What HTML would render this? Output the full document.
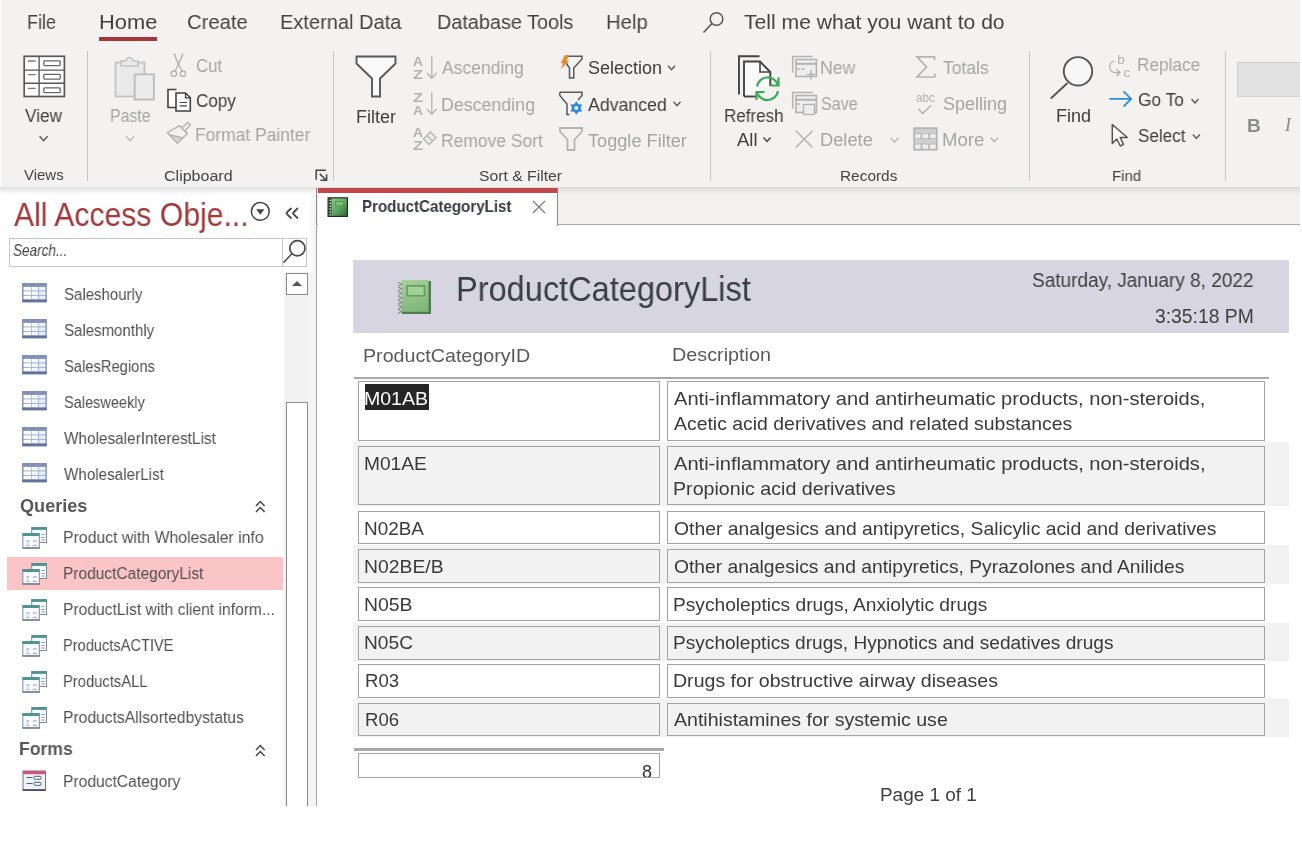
<!DOCTYPE html>
<html><head><meta charset="utf-8">
<style>
html,body{margin:0;padding:0;}
body{width:1302px;height:842px;overflow:hidden;position:relative;background:#fff;font-family:"Liberation Sans",sans-serif;}
.abs{position:absolute;}
.t{position:absolute;white-space:nowrap;line-height:1;transform-origin:0 0;will-change:transform;}
.box{border:1px solid #a3a3a3;box-sizing:content-box;}
svg{position:absolute;overflow:visible;will-change:transform;}
</style></head><body>
<!-- ribbon -->
<div class="abs" style="left:1px;top:0;width:1299px;height:187px;background:#f3f2f1"></div>
<div class="abs" style="left:0;top:187px;width:1300px;height:8px;background:linear-gradient(#dcdcdc,rgba(240,240,240,0))"></div>
<div class="abs" style="left:99px;top:37px;width:58px;height:4px;background:#a4373a"></div>
<!-- group separators -->
<div class="abs" style="left:86.5px;top:51px;width:1px;height:130px;background:#c8c6c4"></div>
<div class="abs" style="left:332.5px;top:51px;width:1px;height:130px;background:#c8c6c4"></div>
<div class="abs" style="left:709.5px;top:51px;width:1px;height:130px;background:#c8c6c4"></div>
<div class="abs" style="left:1028.5px;top:51px;width:1px;height:130px;background:#c8c6c4"></div>
<div class="abs" style="left:1224.5px;top:51px;width:1px;height:130px;background:#c8c6c4"></div>
<!-- text formatting combobox -->
<div class="abs" style="left:1237px;top:62px;width:63px;height:35px;background:#e1e1e1;border:1px solid #d2d2d2;border-right:none;box-sizing:border-box"></div>
<div class="t" style="left:1247.3px;top:115.5px;font-size:19px;font-weight:700;color:#8c8c8c;">B</div>
<div class="t" style="left:1285px;top:116px;font-size:18px;font-style:italic;color:#8a8a8a;font-family:'Liberation Serif',serif">I</div>

<!-- nav pane -->
<div class="abs" style="left:0;top:187px;width:316px;height:619px;background:#fff"></div>
<div class="abs" style="left:0;top:187px;width:316px;height:8px;background:linear-gradient(#e0e0e0,rgba(255,255,255,0))"></div>
<div class="abs" style="left:309px;top:195px;width:7px;height:77px;background:linear-gradient(90deg,rgba(240,240,240,0),#f2f2f2)"></div>
<div class="abs" style="left:315.8px;top:188px;width:1.2px;height:618px;background:#a4a4a4"></div>
<div class="abs" style="left:315.5px;top:188px;width:2px;height:36px;background:#8a8a8a"></div>
<!-- search box -->
<div class="abs" style="left:8.5px;top:238px;width:298px;height:29px;border:1px solid #c6c6c6;box-sizing:border-box;background:#fff"></div>
<div class="abs" style="left:281.5px;top:238px;width:1px;height:29px;background:#c6c6c6"></div>
<!-- scrollbar -->
<div class="abs" style="left:284px;top:272px;width:24px;height:534px;background:#f1f1f1"></div><div class="abs" style="left:308px;top:272px;width:8px;height:534px;background:linear-gradient(90deg,#f3f3f3,#f6f6f6)"></div>
<div class="abs" style="left:285.5px;top:272.5px;width:22px;height:22px;border:1px solid #8a8a8a;box-sizing:border-box;background:#fff"></div>
<div class="abs" style="left:285.5px;top:402px;width:22px;height:420px;border:1px solid #8a8a8a;box-sizing:border-box;background:#fff"></div>
<svg style="left:290px;top:277px" width="14" height="12"><path d="M2 9 L7 4 L12 9 Z" fill="#555"/></svg>
<!-- highlight -->
<div class="abs" style="left:7px;top:557px;width:276px;height:33px;background:#fbc5c7"></div>

<!-- tab strip -->
<div class="abs" style="left:317px;top:187px;width:983px;height:38px;background:#f2f1f0;border-bottom:1.5px solid #a6a6a6;box-sizing:border-box"></div>
<div class="abs" style="left:317px;top:187px;width:983px;height:8px;background:linear-gradient(#dcdcdc,rgba(240,240,240,0))"></div>
<div class="abs" style="left:318px;top:188px;width:240px;height:38px;background:#fff;border-right:1px solid #8a8a8a;box-sizing:border-box"></div>
<div class="abs" style="left:318px;top:188px;width:239px;height:5px;background:#c0474a"></div>

<!-- report header -->
<div class="abs" style="left:353px;top:259.5px;width:935.5px;height:73.5px;background:#d6d5e1"></div>
<div class="abs" style="left:354px;top:377px;width:914.5px;height:2px;background:#a8a8a8"></div>
<div class="abs box" style="left:357.5px;top:381.0px;width:300.5px;height:58.0px;background:#fff"></div>
<div class="abs box" style="left:666.5px;top:381.0px;width:596.8px;height:58.0px;background:#fff"></div>
<div class="abs" style="left:353px;top:442.2px;width:936px;height:64.2px;background:#f2f2f2"></div>
<div class="abs box" style="left:357.5px;top:445.7px;width:300.5px;height:57.7px;background:#f2f2f2"></div>
<div class="abs box" style="left:666.5px;top:445.7px;width:596.8px;height:57.7px;background:#f2f2f2"></div>
<div class="abs box" style="left:357.5px;top:510.7px;width:300.5px;height:31.0px;background:#fff"></div>
<div class="abs box" style="left:666.5px;top:510.7px;width:596.8px;height:31.0px;background:#fff"></div>
<div class="abs" style="left:353px;top:545.4px;width:936px;height:38.5px;background:#f2f2f2"></div>
<div class="abs box" style="left:357.5px;top:548.9px;width:300.5px;height:32.0px;background:#f2f2f2"></div>
<div class="abs box" style="left:666.5px;top:548.9px;width:596.8px;height:32.0px;background:#f2f2f2"></div>
<div class="abs box" style="left:357.5px;top:587.0px;width:300.5px;height:32.0px;background:#fff"></div>
<div class="abs box" style="left:666.5px;top:587.0px;width:596.8px;height:32.0px;background:#fff"></div>
<div class="abs" style="left:353px;top:622.5px;width:936px;height:38.3px;background:#f2f2f2"></div>
<div class="abs box" style="left:357.5px;top:626.0px;width:300.5px;height:31.8px;background:#f2f2f2"></div>
<div class="abs box" style="left:666.5px;top:626.0px;width:596.8px;height:31.8px;background:#f2f2f2"></div>
<div class="abs box" style="left:357.5px;top:664.3px;width:300.5px;height:31.7px;background:#fff"></div>
<div class="abs box" style="left:666.5px;top:664.3px;width:596.8px;height:31.7px;background:#fff"></div>
<div class="abs" style="left:353px;top:699.0px;width:936px;height:38.2px;background:#f2f2f2"></div>
<div class="abs box" style="left:357.5px;top:702.5px;width:300.5px;height:31.7px;background:#f2f2f2"></div>
<div class="abs box" style="left:666.5px;top:702.5px;width:596.8px;height:31.7px;background:#f2f2f2"></div>
<div class="abs" style="left:365px;top:384.3px;width:63.5px;height:26px;background:#262626"></div>
<div class="abs" style="left:354px;top:748px;width:309.5px;height:3px;background:#a8a8a8"></div>
<div class="abs box" style="left:357.5px;top:753.2px;width:300.5px;height:22.5px;background:#fff;overflow:hidden"><div class="t" style="left:283.5px;top:9px;font-size:18px;color:#333;">8</div></div>

<svg style="left:0;top:0" width="1302" height="842"><defs><linearGradient id="gtab" x1="0" y1="0" x2="1" y2="1"><stop offset="0" stop-color="#8ccf8a"/><stop offset="0.55" stop-color="#5fa863"/><stop offset="1" stop-color="#2f6a35"/></linearGradient><linearGradient id="gbook" x1="0" y1="0" x2="0.3" y2="1"><stop offset="0" stop-color="#a3d39a"/><stop offset="1" stop-color="#84b87b"/></linearGradient></defs>
<rect x="24.2" y="56.3" width="40.2" height="40.2" fill="#fff" stroke="#595959" stroke-width="1.7"/>
<path d="M39.1 56 V97 M24 70.1 H65 M24 83.3 H65" stroke="#595959" stroke-width="1.4"/>
<path d="M27.8 61 H35.7 M27.8 74.6 H35.7 M27.8 88.3 H35.7" stroke="#777" stroke-width="1.3"/>
<rect x="43.8" y="60.8" width="16.4" height="4.8" rx="0.8" fill="#fff" stroke="#666" stroke-width="1.3"/>
<rect x="43.8" y="74.3" width="16.4" height="4.8" rx="0.8" fill="#fff" stroke="#666" stroke-width="1.3"/>
<rect x="43.8" y="87.9" width="16.4" height="4.8" rx="0.8" fill="#fff" stroke="#666" stroke-width="1.3"/>
<path d="M39.6 136.2 L43.6 140.8 L47.6 136.2" fill="none" stroke="#555" stroke-width="1.4"/>
<rect x="115.5" y="62.5" width="29" height="34" fill="#e9e9e9" stroke="#c4c4c4" stroke-width="1.8"/>
<path d="M121 66 V61 H126 A3.5 3.5 0 0 1 133 61 H138 V66 Z" fill="#e9e9e9" stroke="#c4c4c4" stroke-width="1.6"/>
<rect x="134.7" y="74.3" width="19.2" height="25.2" fill="#ececec" stroke="#bdbdbd" stroke-width="1.9"/>
<path d="M126.0 136.2 L130.0 140.8 L134.0 136.2" fill="none" stroke="#bbb" stroke-width="1.4"/>
<path d="M174.3 53.5 Q176.5 60.5 178.5 63.8 L181.8 71 M182.8 53.5 Q180.5 60.5 178.5 63.8 L175.2 71" stroke="#b3b3b3" stroke-width="1.4" fill="none"/>
<circle cx="173.9" cy="73.7" r="2.7" fill="none" stroke="#b3b3b3" stroke-width="1.3"/><circle cx="182.9" cy="73.7" r="2.7" fill="none" stroke="#b3b3b3" stroke-width="1.3"/>
<path d="M176.5 89.5 H168 V107.5 H175.5" fill="#fff" stroke="#404040" stroke-width="1.6"/>
<path d="M176 93 H185.5 L190.3 97.8 V111 H176 Z" fill="#fff" stroke="#404040" stroke-width="1.6"/>
<path d="M185.5 93 V97.8 H190.3" fill="none" stroke="#404040" stroke-width="1.3"/>
<path d="M179.5 102.5 H187 M179.5 105.8 H187" stroke="#404040" stroke-width="1.2"/>
<path d="M168.8 134.7 L183.4 138 L177.3 143.3 Z" fill="#d4d4d4"/>
<path d="M167.3 132.6 L176.6 127.3 L179.5 125.7 L182 128 L187.7 122.6 L190.5 124.8 L185.2 130.5 L187.3 133.7 L177.3 143.3 Z" fill="none" stroke="#b3b3b3" stroke-width="1.4" stroke-linejoin="round"/>
<path d="M179.5 125.7 L187.3 133.7 M168.8 134.7 L183.4 138" fill="none" stroke="#b3b3b3" stroke-width="1.3"/>
<path d="M316.2 179.8 V170.2 H325.8" fill="none" stroke="#444" stroke-width="1.5"/>
<path d="M319.8 173.9 L326 180 M320.4 180.3 H326.6 V174.3" fill="none" stroke="#444" stroke-width="1.5"/>
<path d="M356.5 56.5 H395.5 V63.5 L380 78.5 V96.5 H372 V78.5 L356.5 63.5 Z" fill="#fafafa" stroke="#595959" stroke-width="1.9" stroke-linejoin="miter"/>
<text x="413" y="65.6" font-family="Liberation Sans" font-size="13.5" font-weight="bold" fill="#b3b3b3" textLength="10" lengthAdjust="spacingAndGlyphs">A</text><text x="413" y="78.6" font-family="Liberation Sans" font-size="13.5" font-weight="bold" fill="#b3b3b3" textLength="10" lengthAdjust="spacingAndGlyphs">Z</text>
<path d="M431.8 56.5 V78 M427 73 L431.8 78.3 L436.6 73" fill="none" stroke="#b3b3b3" stroke-width="1.3"/>
<text x="413" y="101.6" font-family="Liberation Sans" font-size="13.5" font-weight="bold" fill="#b3b3b3" textLength="10" lengthAdjust="spacingAndGlyphs">Z</text><text x="413" y="114.6" font-family="Liberation Sans" font-size="13.5" font-weight="bold" fill="#b3b3b3" textLength="10" lengthAdjust="spacingAndGlyphs">A</text>
<path d="M431.8 92.3 V114 M427 109 L431.8 114.3 L436.6 109" fill="none" stroke="#b3b3b3" stroke-width="1.3"/>
<text x="413" y="137.3" font-family="Liberation Sans" font-size="13.5" font-weight="bold" fill="#b3b3b3" textLength="10" lengthAdjust="spacingAndGlyphs">A</text><text x="413" y="150.3" font-family="Liberation Sans" font-size="13.5" font-weight="bold" fill="#b3b3b3" textLength="10" lengthAdjust="spacingAndGlyphs">Z</text>
<path d="M423.5 139 L430.5 132 L436 137.5 L429 144.5 Z M427 135.5 L432.5 141" fill="#ececec" stroke="#b3b3b3" stroke-width="1.3"/>
<path d="M565.5 56.3 H582 V59 L573.8 68 V78 H569.5 V68 L565.5 62" fill="none" stroke="#595959" stroke-width="1.5"/>
<path d="M564.8 55.3 L569.3 55.3 L566.3 60.8 L569.3 60.8 L560.3 69.5 L563.3 63.3 L560.6 63.3 Z" fill="#e8892b"/>
<path d="M559.8 92.3 H582 V95.5 L578 100 M559.8 92.3 V95.5 L567 104 V114.5 H569.5" fill="none" stroke="#595959" stroke-width="1.5"/>
<polygon points="576.30,101.20 574.19,104.35 570.41,104.60 572.08,108.00 570.41,111.40 574.19,111.65 576.30,114.80 578.41,111.65 582.19,111.40 580.52,108.00 582.19,104.60 578.41,104.35" fill="#2f8ad6"/><circle cx="576.3" cy="108" r="2" fill="#e8f3fc"/>
<path d="M560 128 H582 V131.5 L574.5 139.5 V150 H567.5 V139.5 L560 131.5 Z" fill="none" stroke="#b3b3b3" stroke-width="1.8"/>
<path d="M668.0 65.8 L671.5 69.8 L675.0 65.8" fill="none" stroke="#555" stroke-width="1.3"/>
<path d="M673.5 101.8 L677.0 105.8 L680.5 101.8" fill="none" stroke="#555" stroke-width="1.3"/>
<path d="M739 94.5 V56.3 H759.5" fill="none" stroke="#444" stroke-width="1.9"/>
<path d="M744 96.5 V61.5 H760 L770.3 72 V86" fill="#fafafa" stroke="#444" stroke-width="1.9"/>
<path d="M744 96.5 H757" fill="none" stroke="#444" stroke-width="1.9"/>
<path d="M760 61.5 V72 H770.3" fill="none" stroke="#444" stroke-width="1.6"/>
<path d="M757 86.5 A10.8 10.8 0 0 1 777.8 84.5 M778 91 A10.8 10.8 0 0 1 757.2 93" fill="none" stroke="#3da85a" stroke-width="2.2"/>
<path d="M770.5 85.5 H778.5 V77.5" fill="none" stroke="#3da85a" stroke-width="2.2"/><path d="M764.5 92 H756.5 V100" fill="none" stroke="#3da85a" stroke-width="2.2"/>
<path d="M763.5 137.5 L767.0 141.5 L770.5 137.5" fill="none" stroke="#444" stroke-width="1.4"/>
<path d="M792.7 72.5 V56.5 H812.7" fill="none" stroke="#b3b3b3" stroke-width="1.5"/><rect x="795.9000000000001" y="59.5" width="20.5" height="17" fill="#eeeeee" stroke="#b3b3b3" stroke-width="1.6"/><path d="M795.9000000000001 63.8 H816.4000000000001" stroke="#b3b3b3" stroke-width="2"/>
<path d="M797 69 h3 M801.5 69 h3 M811 70 v9.5 M806.5 74.5 h9" stroke="#b3b3b3" stroke-width="1.5"/>
<path d="M792.7 108.5 V92.5 H812.7" fill="none" stroke="#b3b3b3" stroke-width="1.5"/><rect x="795.9000000000001" y="95.5" width="20.5" height="17" fill="#eeeeee" stroke="#b3b3b3" stroke-width="1.6"/><path d="M795.9000000000001 99.8 H816.4000000000001" stroke="#b3b3b3" stroke-width="2"/>
<rect x="803.5" y="104.5" width="11" height="10" fill="#eee" stroke="#b3b3b3" stroke-width="1.3"/><path d="M797 104 h3" stroke="#b3b3b3" stroke-width="1.4"/>
<path d="M795.8 130.8 L812.5 147.5 M812.5 130.8 L795.8 147.5" stroke="#b3b3b3" stroke-width="1.5"/>
<path d="M890.5 137.6 L894.5 142.1 L898.5 137.6" fill="none" stroke="#b3b3b3" stroke-width="1.3"/>
<path d="M934.5 60 V56.8 H917 L926.5 67 L917 77 H934.8 V73.5" fill="none" stroke="#b3b3b3" stroke-width="1.7"/>
<text x="916" y="101.7" font-family="Liberation Sans" font-size="13" fill="#b3b3b3" textLength="19" lengthAdjust="spacingAndGlyphs">abc</text>
<path d="M918.5 108.8 L922.5 113.5 L931 105.5" fill="none" stroke="#b3b3b3" stroke-width="1.5"/>
<rect x="914.2" y="128.2" width="22.5" height="21.5" fill="#eee" stroke="#b3b3b3" stroke-width="1.8"/>
<path d="M914 133.5 H937 M914 139 H937 M914 143.8 H937 M921.5 133.5 V139 M929 133.5 V139 M921.5 143.8 V150 M929 143.8 V150" stroke="#b3b3b3" stroke-width="1.6"/>
<rect x="915" y="139" width="21" height="4.8" fill="#cfcfcf"/>
<rect x="915" y="129" width="21" height="4.5" fill="#cfcfcf"/>
<path d="M990.8 137.8 L994.3 141.8 L997.8 137.8" fill="none" stroke="#b3b3b3" stroke-width="1.3"/>
<circle cx="1078" cy="71.3" r="14.2" fill="#f7f7f7" stroke="#555" stroke-width="1.9"/>
<path d="M1067.5 83 L1050.8 98.5" stroke="#555" stroke-width="1.9"/>
<text x="1117.3" y="63.8" font-family="Liberation Sans" font-size="13.5" fill="#b3b3b3">b</text><text x="1123.6" y="76.6" font-family="Liberation Sans" font-size="13.5" fill="#b3b3b3">c</text>
<path d="M1114 61 A6 6 0 0 0 1114 72.5 H1120 M1116.5 69 L1120 72.5 L1116.5 76" fill="none" stroke="#b3b3b3" stroke-width="1.3"/>
<path d="M1109.3 98.9 H1131 M1123.5 91.3 L1131.2 98.9 L1123.5 106.5" fill="none" stroke="#2f8fd6" stroke-width="1.8"/>
<path d="M1112.3 124.5 V143.5 L1116.8 139 L1120.3 146 L1123.5 144.3 L1120.2 137.5 L1127.3 137.5 Z" fill="#fafafa" stroke="#555" stroke-width="1.5" stroke-linejoin="round"/>
<path d="M1191.5 99.0 L1195.0 103.0 L1198.5 99.0" fill="none" stroke="#555" stroke-width="1.3"/>
<path d="M1192.9 134.5 L1196.4 138.5 L1199.9 134.5" fill="none" stroke="#555" stroke-width="1.3"/>
<circle cx="716.5" cy="19" r="6.3" fill="none" stroke="#555" stroke-width="1.5"/><path d="M712 23.5 L703.5 32.5" stroke="#555" stroke-width="1.6"/>
<circle cx="260.3" cy="211.4" r="8.9" fill="none" stroke="#444" stroke-width="1.5"/><path d="M256.2 209.3 H264.4 L260.3 214.8 Z" fill="#444"/>
<path d="M291 208.5 Q287.5 211.5 286.5 213.3 Q288 215.5 291 218 M297.5 208.5 Q294 211.5 293 213.3 Q294.5 215.5 297.5 218" fill="none" stroke="#444" stroke-width="1.8" stroke-linecap="round"/>
<circle cx="297.4" cy="248.3" r="7.6" fill="#fafafa" stroke="#4a4a4a" stroke-width="1.7"/><path d="M291.8 253.8 L283.5 262.8" stroke="#4a4a4a" stroke-width="1.6"/>
<path d="M256 506.0 L260.3 501.5 L264.6 506.0 M256 512.0 L260.3 507.5 L264.6 512.0" fill="none" stroke="#444" stroke-width="1.5"/>
<path d="M256 750.0 L260.3 745.5 L264.6 750.0 M256 756.0 L260.3 751.5 L264.6 756.0" fill="none" stroke="#444" stroke-width="1.5"/>
<g transform="translate(22.3,283.2)"><rect x="0" y="0" width="24.3" height="19" fill="#a3b0cc"/><rect x="0.5" y="0.5" width="23.3" height="18" fill="none" stroke="#7383aa" stroke-width="1"/><rect x="0" y="0" width="24.3" height="3.4" fill="#8291b7"/><rect x="1.3" y="3.8" width="7.4" height="3.4" fill="#ffffff"/><rect x="9.4" y="3.8" width="6.5" height="3.4" fill="#f8f9fe"/><rect x="16.8" y="3.8" width="6.3" height="3.4" fill="#eef1fb"/><rect x="1.3" y="8.2" width="7.4" height="3.5" fill="#ffffff"/><rect x="9.4" y="8.2" width="6.5" height="3.5" fill="#f4f6fd"/><rect x="16.8" y="8.2" width="6.3" height="3.5" fill="#e9edfa"/><rect x="1.3" y="12.7" width="7.4" height="3.2" fill="#ffffff"/><rect x="9.4" y="12.7" width="6.5" height="3.2" fill="#f1f4fc"/><rect x="16.8" y="12.7" width="6.3" height="3.2" fill="#e6ebf9"/><rect x="0" y="16.5" width="24.3" height="2.5" fill="#64739b"/></g>
<g transform="translate(22.3,319.2)"><rect x="0" y="0" width="24.3" height="19" fill="#a3b0cc"/><rect x="0.5" y="0.5" width="23.3" height="18" fill="none" stroke="#7383aa" stroke-width="1"/><rect x="0" y="0" width="24.3" height="3.4" fill="#8291b7"/><rect x="1.3" y="3.8" width="7.4" height="3.4" fill="#ffffff"/><rect x="9.4" y="3.8" width="6.5" height="3.4" fill="#f8f9fe"/><rect x="16.8" y="3.8" width="6.3" height="3.4" fill="#eef1fb"/><rect x="1.3" y="8.2" width="7.4" height="3.5" fill="#ffffff"/><rect x="9.4" y="8.2" width="6.5" height="3.5" fill="#f4f6fd"/><rect x="16.8" y="8.2" width="6.3" height="3.5" fill="#e9edfa"/><rect x="1.3" y="12.7" width="7.4" height="3.2" fill="#ffffff"/><rect x="9.4" y="12.7" width="6.5" height="3.2" fill="#f1f4fc"/><rect x="16.8" y="12.7" width="6.3" height="3.2" fill="#e6ebf9"/><rect x="0" y="16.5" width="24.3" height="2.5" fill="#64739b"/></g>
<g transform="translate(22.3,355.2)"><rect x="0" y="0" width="24.3" height="19" fill="#a3b0cc"/><rect x="0.5" y="0.5" width="23.3" height="18" fill="none" stroke="#7383aa" stroke-width="1"/><rect x="0" y="0" width="24.3" height="3.4" fill="#8291b7"/><rect x="1.3" y="3.8" width="7.4" height="3.4" fill="#ffffff"/><rect x="9.4" y="3.8" width="6.5" height="3.4" fill="#f8f9fe"/><rect x="16.8" y="3.8" width="6.3" height="3.4" fill="#eef1fb"/><rect x="1.3" y="8.2" width="7.4" height="3.5" fill="#ffffff"/><rect x="9.4" y="8.2" width="6.5" height="3.5" fill="#f4f6fd"/><rect x="16.8" y="8.2" width="6.3" height="3.5" fill="#e9edfa"/><rect x="1.3" y="12.7" width="7.4" height="3.2" fill="#ffffff"/><rect x="9.4" y="12.7" width="6.5" height="3.2" fill="#f1f4fc"/><rect x="16.8" y="12.7" width="6.3" height="3.2" fill="#e6ebf9"/><rect x="0" y="16.5" width="24.3" height="2.5" fill="#64739b"/></g>
<g transform="translate(22.3,391.2)"><rect x="0" y="0" width="24.3" height="19" fill="#a3b0cc"/><rect x="0.5" y="0.5" width="23.3" height="18" fill="none" stroke="#7383aa" stroke-width="1"/><rect x="0" y="0" width="24.3" height="3.4" fill="#8291b7"/><rect x="1.3" y="3.8" width="7.4" height="3.4" fill="#ffffff"/><rect x="9.4" y="3.8" width="6.5" height="3.4" fill="#f8f9fe"/><rect x="16.8" y="3.8" width="6.3" height="3.4" fill="#eef1fb"/><rect x="1.3" y="8.2" width="7.4" height="3.5" fill="#ffffff"/><rect x="9.4" y="8.2" width="6.5" height="3.5" fill="#f4f6fd"/><rect x="16.8" y="8.2" width="6.3" height="3.5" fill="#e9edfa"/><rect x="1.3" y="12.7" width="7.4" height="3.2" fill="#ffffff"/><rect x="9.4" y="12.7" width="6.5" height="3.2" fill="#f1f4fc"/><rect x="16.8" y="12.7" width="6.3" height="3.2" fill="#e6ebf9"/><rect x="0" y="16.5" width="24.3" height="2.5" fill="#64739b"/></g>
<g transform="translate(22.3,427.2)"><rect x="0" y="0" width="24.3" height="19" fill="#a3b0cc"/><rect x="0.5" y="0.5" width="23.3" height="18" fill="none" stroke="#7383aa" stroke-width="1"/><rect x="0" y="0" width="24.3" height="3.4" fill="#8291b7"/><rect x="1.3" y="3.8" width="7.4" height="3.4" fill="#ffffff"/><rect x="9.4" y="3.8" width="6.5" height="3.4" fill="#f8f9fe"/><rect x="16.8" y="3.8" width="6.3" height="3.4" fill="#eef1fb"/><rect x="1.3" y="8.2" width="7.4" height="3.5" fill="#ffffff"/><rect x="9.4" y="8.2" width="6.5" height="3.5" fill="#f4f6fd"/><rect x="16.8" y="8.2" width="6.3" height="3.5" fill="#e9edfa"/><rect x="1.3" y="12.7" width="7.4" height="3.2" fill="#ffffff"/><rect x="9.4" y="12.7" width="6.5" height="3.2" fill="#f1f4fc"/><rect x="16.8" y="12.7" width="6.3" height="3.2" fill="#e6ebf9"/><rect x="0" y="16.5" width="24.3" height="2.5" fill="#64739b"/></g>
<g transform="translate(22.3,463.2)"><rect x="0" y="0" width="24.3" height="19" fill="#a3b0cc"/><rect x="0.5" y="0.5" width="23.3" height="18" fill="none" stroke="#7383aa" stroke-width="1"/><rect x="0" y="0" width="24.3" height="3.4" fill="#8291b7"/><rect x="1.3" y="3.8" width="7.4" height="3.4" fill="#ffffff"/><rect x="9.4" y="3.8" width="6.5" height="3.4" fill="#f8f9fe"/><rect x="16.8" y="3.8" width="6.3" height="3.4" fill="#eef1fb"/><rect x="1.3" y="8.2" width="7.4" height="3.5" fill="#ffffff"/><rect x="9.4" y="8.2" width="6.5" height="3.5" fill="#f4f6fd"/><rect x="16.8" y="8.2" width="6.3" height="3.5" fill="#e9edfa"/><rect x="1.3" y="12.7" width="7.4" height="3.2" fill="#ffffff"/><rect x="9.4" y="12.7" width="6.5" height="3.2" fill="#f1f4fc"/><rect x="16.8" y="12.7" width="6.3" height="3.2" fill="#e6ebf9"/><rect x="0" y="16.5" width="24.3" height="2.5" fill="#64739b"/></g>
<g transform="translate(22.3,527)"><rect x="9.4" y="0.5" width="14.8" height="15" fill="#f7fafd" stroke="#7d8aa0" stroke-width="1"/><rect x="9.4" y="0.3" width="14.8" height="2.6" fill="#4a9591"/><path d="M19 7.5 h3.5 M19 10.5 h3.5 M19 13 h3.5" stroke="#8d98a8" stroke-width="0.9"/><rect x="0.5" y="6.5" width="16.5" height="14.5" fill="#f8fafe" stroke="#7d8aa0" stroke-width="1"/><rect x="0.5" y="6.3" width="16.5" height="2.7" fill="#4a9591"/><path d="M4 14 h3 M10.5 14 h4 M4 18.3 h3 M10.5 18.3 h4" stroke="#8a95a6" stroke-width="0.9"/><path d="M4 16.2 h2.5" stroke="#b9c1cc" stroke-width="0.8"/><rect x="0.3" y="20.3" width="17" height="1.3" fill="#6a7588"/></g>
<g transform="translate(22.3,563)"><rect x="9.4" y="0.5" width="14.8" height="15" fill="#f7fafd" stroke="#7d8aa0" stroke-width="1"/><rect x="9.4" y="0.3" width="14.8" height="2.6" fill="#4a9591"/><path d="M19 7.5 h3.5 M19 10.5 h3.5 M19 13 h3.5" stroke="#8d98a8" stroke-width="0.9"/><rect x="0.5" y="6.5" width="16.5" height="14.5" fill="#f8fafe" stroke="#7d8aa0" stroke-width="1"/><rect x="0.5" y="6.3" width="16.5" height="2.7" fill="#4a9591"/><path d="M4 14 h3 M10.5 14 h4 M4 18.3 h3 M10.5 18.3 h4" stroke="#8a95a6" stroke-width="0.9"/><path d="M4 16.2 h2.5" stroke="#b9c1cc" stroke-width="0.8"/><rect x="0.3" y="20.3" width="17" height="1.3" fill="#6a7588"/></g>
<g transform="translate(22.3,599)"><rect x="9.4" y="0.5" width="14.8" height="15" fill="#f7fafd" stroke="#7d8aa0" stroke-width="1"/><rect x="9.4" y="0.3" width="14.8" height="2.6" fill="#4a9591"/><path d="M19 7.5 h3.5 M19 10.5 h3.5 M19 13 h3.5" stroke="#8d98a8" stroke-width="0.9"/><rect x="0.5" y="6.5" width="16.5" height="14.5" fill="#f8fafe" stroke="#7d8aa0" stroke-width="1"/><rect x="0.5" y="6.3" width="16.5" height="2.7" fill="#4a9591"/><path d="M4 14 h3 M10.5 14 h4 M4 18.3 h3 M10.5 18.3 h4" stroke="#8a95a6" stroke-width="0.9"/><path d="M4 16.2 h2.5" stroke="#b9c1cc" stroke-width="0.8"/><rect x="0.3" y="20.3" width="17" height="1.3" fill="#6a7588"/></g>
<g transform="translate(22.3,635)"><rect x="9.4" y="0.5" width="14.8" height="15" fill="#f7fafd" stroke="#7d8aa0" stroke-width="1"/><rect x="9.4" y="0.3" width="14.8" height="2.6" fill="#4a9591"/><path d="M19 7.5 h3.5 M19 10.5 h3.5 M19 13 h3.5" stroke="#8d98a8" stroke-width="0.9"/><rect x="0.5" y="6.5" width="16.5" height="14.5" fill="#f8fafe" stroke="#7d8aa0" stroke-width="1"/><rect x="0.5" y="6.3" width="16.5" height="2.7" fill="#4a9591"/><path d="M4 14 h3 M10.5 14 h4 M4 18.3 h3 M10.5 18.3 h4" stroke="#8a95a6" stroke-width="0.9"/><path d="M4 16.2 h2.5" stroke="#b9c1cc" stroke-width="0.8"/><rect x="0.3" y="20.3" width="17" height="1.3" fill="#6a7588"/></g>
<g transform="translate(22.3,671)"><rect x="9.4" y="0.5" width="14.8" height="15" fill="#f7fafd" stroke="#7d8aa0" stroke-width="1"/><rect x="9.4" y="0.3" width="14.8" height="2.6" fill="#4a9591"/><path d="M19 7.5 h3.5 M19 10.5 h3.5 M19 13 h3.5" stroke="#8d98a8" stroke-width="0.9"/><rect x="0.5" y="6.5" width="16.5" height="14.5" fill="#f8fafe" stroke="#7d8aa0" stroke-width="1"/><rect x="0.5" y="6.3" width="16.5" height="2.7" fill="#4a9591"/><path d="M4 14 h3 M10.5 14 h4 M4 18.3 h3 M10.5 18.3 h4" stroke="#8a95a6" stroke-width="0.9"/><path d="M4 16.2 h2.5" stroke="#b9c1cc" stroke-width="0.8"/><rect x="0.3" y="20.3" width="17" height="1.3" fill="#6a7588"/></g>
<g transform="translate(22.3,707)"><rect x="9.4" y="0.5" width="14.8" height="15" fill="#f7fafd" stroke="#7d8aa0" stroke-width="1"/><rect x="9.4" y="0.3" width="14.8" height="2.6" fill="#4a9591"/><path d="M19 7.5 h3.5 M19 10.5 h3.5 M19 13 h3.5" stroke="#8d98a8" stroke-width="0.9"/><rect x="0.5" y="6.5" width="16.5" height="14.5" fill="#f8fafe" stroke="#7d8aa0" stroke-width="1"/><rect x="0.5" y="6.3" width="16.5" height="2.7" fill="#4a9591"/><path d="M4 14 h3 M10.5 14 h4 M4 18.3 h3 M10.5 18.3 h4" stroke="#8a95a6" stroke-width="0.9"/><path d="M4 16.2 h2.5" stroke="#b9c1cc" stroke-width="0.8"/><rect x="0.3" y="20.3" width="17" height="1.3" fill="#6a7588"/></g>
<g transform="translate(22.5,770.5)"><rect x="0.5" y="0.5" width="22.5" height="19.5" fill="#eef0fb" stroke="#6f7890" stroke-width="1"/><rect x="0.5" y="0.5" width="22.5" height="3.2" fill="#d0557a"/><path d="M4 7 h6 M4 13 h6" stroke="#555e70" stroke-width="1.2"/><rect x="11.5" y="5.8" width="7" height="3" rx="1" fill="#fff" stroke="#555e70" stroke-width="1"/><rect x="11.5" y="11.8" width="7" height="3" rx="1" fill="#fff" stroke="#555e70" stroke-width="1"/><rect x="0.5" y="18.7" width="22.5" height="1.6" fill="#3e4558"/></g>
<g transform="translate(327.5,197.2)"><rect x="0" y="0" width="20.5" height="19.8" fill="#1f2e20"/><rect x="1.2" y="1.2" width="18.1" height="17.400000000000002" fill="url(#gtab)"/><rect x="1" y="1" width="3" height="17.8" fill="#2a3a2c"/><rect x="2" y="2.5" width="1.6" height="1.4" fill="#cfd8cf"/><rect x="2" y="5.4" width="1.6" height="1.4" fill="#cfd8cf"/><rect x="2" y="8.3" width="1.6" height="1.4" fill="#cfd8cf"/><rect x="2" y="11.2" width="1.6" height="1.4" fill="#cfd8cf"/><rect x="2" y="14.1" width="1.6" height="1.4" fill="#cfd8cf"/><rect x="2" y="17.0" width="1.6" height="1.4" fill="#cfd8cf"/><rect x="7.4" y="3.8" width="9.2" height="5.3" fill="#4f9550" opacity="0.9"/><rect x="8.4" y="4.8" width="7.2" height="3.3" fill="#7dbf7b"/></g>
<path d="M533 201 L545 213 M545 201 L533 213" stroke="#777" stroke-width="1.2"/>
<g transform="translate(397.5,280)"><rect x="4.5" y="1" width="29.0" height="33" fill="#4f7d4b"/><rect x="3.8" y="0" width="27.2" height="31.8" fill="url(#gbook)"/><rect x="9.5" y="5.8" width="17.5" height="10" fill="#8fc287" stroke="#6a9b63" stroke-width="1.6"/><rect x="10.6" y="6.9" width="15.3" height="7.8" fill="#a2d099"/><path d="M0.6 2.3 l3.6 1.9 l-3.6 1.9" fill="none" stroke="#8c8c8c" stroke-width="1.1"/><path d="M0.6 6.8 l3.6 1.9 l-3.6 1.9" fill="none" stroke="#8c8c8c" stroke-width="1.1"/><path d="M0.6 11.4 l3.6 1.9 l-3.6 1.9" fill="none" stroke="#8c8c8c" stroke-width="1.1"/><path d="M0.6 15.9 l3.6 1.9 l-3.6 1.9" fill="none" stroke="#8c8c8c" stroke-width="1.1"/><path d="M0.6 20.5 l3.6 1.9 l-3.6 1.9" fill="none" stroke="#8c8c8c" stroke-width="1.1"/><path d="M0.6 25.1 l3.6 1.9 l-3.6 1.9" fill="none" stroke="#8c8c8c" stroke-width="1.1"/><path d="M0.6 29.6 l3.6 1.9 l-3.6 1.9" fill="none" stroke="#8c8c8c" stroke-width="1.1"/></g></svg>
<div class="t" style="left:26.65px;top:11.16px;font-size:21.08px;color:#444;transform:scaleX(0.8529);">File</div>
<div class="t" style="left:98.96px;top:11.16px;font-size:21.08px;color:#404040;transform:scaleX(1.0366);">Home</div>
<div class="t" style="left:187.44px;top:11.16px;font-size:21.08px;color:#444;transform:scaleX(0.9603);">Create</div>
<div class="t" style="left:280.45px;top:11.16px;font-size:21.08px;color:#444;transform:scaleX(0.9497);">External Data</div>
<div class="t" style="left:437.06px;top:11.16px;font-size:21.08px;color:#444;transform:scaleX(0.9412);">Database Tools</div>
<div class="t" style="left:606.04px;top:11.16px;font-size:21.08px;color:#444;transform:scaleX(0.9609);">Help</div>
<div class="t" style="left:744.30px;top:11.16px;font-size:21.08px;color:#444;transform:scaleX(1.0020);">Tell me what you want to do</div>
<div class="t" style="left:25.30px;top:106.74px;font-size:18.02px;color:#404040;transform:scaleX(0.9544);">View</div>
<div class="t" style="left:24.00px;top:168.02px;font-size:14.97px;color:#444;transform:scaleX(0.9879);">Views</div>
<div class="t" style="left:110.12px;top:106.74px;font-size:18.02px;color:#a6a6a6;transform:scaleX(0.8813);">Paste</div>
<div class="t" style="left:195.90px;top:56.54px;font-size:18.02px;color:#a6a6a6;transform:scaleX(0.9312);">Cut</div>
<div class="t" style="left:195.90px;top:91.74px;font-size:18.02px;color:#404040;transform:scaleX(0.9489);">Copy</div>
<div class="t" style="left:194.93px;top:126.24px;font-size:18.02px;color:#a6a6a6;transform:scaleX(0.9683);">Format Painter</div>
<div class="t" style="left:163.80px;top:168.08px;font-size:15.26px;color:#444;transform:scaleX(1.0510);">Clipboard</div>
<div class="t" style="left:356.00px;top:107.54px;font-size:18.02px;color:#404040;">Filter</div>
<div class="t" style="left:442.30px;top:59.04px;font-size:18.02px;color:#a6a6a6;transform:scaleX(0.9734);">Ascending</div>
<div class="t" style="left:441.31px;top:95.54px;font-size:18.02px;color:#a6a6a6;transform:scaleX(0.9879);">Descending</div>
<div class="t" style="left:441.33px;top:131.54px;font-size:18.02px;color:#a6a6a6;transform:scaleX(0.9700);">Remove Sort</div>
<div class="t" style="left:588.20px;top:59.04px;font-size:18.02px;color:#404040;transform:scaleX(0.9960);">Selection</div>
<div class="t" style="left:588.20px;top:95.54px;font-size:18.02px;color:#404040;transform:scaleX(0.9847);">Advanced</div>
<div class="t" style="left:588.20px;top:131.54px;font-size:18.02px;color:#a6a6a6;transform:scaleX(1.0079);">Toggle Filter</div>
<div class="t" style="left:479.20px;top:168.28px;font-size:15.26px;color:#444;transform:scaleX(1.0320);">Sort &amp; Filter</div>
<div class="t" style="left:724.36px;top:106.94px;font-size:18.02px;color:#404040;transform:scaleX(0.9449);">Refresh</div>
<div class="t" style="left:736.60px;top:131.04px;font-size:18.02px;color:#404040;transform:scaleX(1.0253);">All</div>
<div class="t" style="left:820.42px;top:59.14px;font-size:18.02px;color:#a6a6a6;transform:scaleX(0.9797);">New</div>
<div class="t" style="left:821.40px;top:94.94px;font-size:18.02px;color:#a6a6a6;transform:scaleX(0.8917);">Save</div>
<div class="t" style="left:820.39px;top:131.04px;font-size:18.02px;color:#a6a6a6;transform:scaleX(1.0146);">Delete</div>
<div class="t" style="left:942.90px;top:59.14px;font-size:18.02px;color:#a6a6a6;transform:scaleX(0.9712);">Totals</div>
<div class="t" style="left:942.90px;top:94.94px;font-size:18.02px;color:#a6a6a6;">Spelling</div>
<div class="t" style="left:941.87px;top:131.04px;font-size:18.02px;color:#a6a6a6;transform:scaleX(1.0318);">More</div>
<div class="t" style="left:839.99px;top:168.08px;font-size:15.26px;color:#444;transform:scaleX(1.0096);">Records</div>
<div class="t" style="left:1055.81px;top:107.14px;font-size:18.02px;color:#404040;transform:scaleX(0.9871);">Find</div>
<div class="t" style="left:1137.34px;top:56.04px;font-size:18.02px;color:#a6a6a6;transform:scaleX(0.9573);">Replace</div>
<div class="t" style="left:1138.30px;top:91.14px;font-size:18.02px;color:#404040;transform:scaleX(0.9595);">Go To</div>
<div class="t" style="left:1138.30px;top:126.74px;font-size:18.02px;color:#404040;transform:scaleX(0.9488);">Select</div>
<div class="t" style="left:1112.12px;top:168.08px;font-size:15.26px;color:#444;transform:scaleX(0.9793);">Find</div>
<div class="t" style="left:13.50px;top:197.66px;font-size:32.99px;color:#a4373a;transform:scaleX(0.9142);">All Access Obje...</div>
<div class="t" style="left:12.50px;top:243.46px;font-size:15.99px;color:#444;font-style:italic;transform:scaleX(0.8476);">Search...</div>
<div class="t" style="left:63.80px;top:285.66px;font-size:17.30px;color:#505050;transform:scaleX(0.8681);">Saleshourly</div>
<div class="t" style="left:63.80px;top:321.66px;font-size:17.30px;color:#505050;transform:scaleX(0.8694);">Salesmonthly</div>
<div class="t" style="left:63.80px;top:357.66px;font-size:17.30px;color:#505050;transform:scaleX(0.8524);">SalesRegions</div>
<div class="t" style="left:63.80px;top:393.66px;font-size:17.30px;color:#505050;transform:scaleX(0.8412);">Salesweekly</div>
<div class="t" style="left:63.80px;top:429.66px;font-size:17.30px;color:#505050;transform:scaleX(0.8880);">WholesalerInterestList</div>
<div class="t" style="left:63.80px;top:465.66px;font-size:17.30px;color:#505050;transform:scaleX(0.8808);">WholesalerList</div>
<div class="t" style="left:20.00px;top:497.86px;font-size:17.88px;color:#585858;font-weight:700;transform:scaleX(1.0138);">Queries</div>
<div class="t" style="left:63.18px;top:529.26px;font-size:17.30px;color:#505050;transform:scaleX(0.9159);">Product with Wholesaler info</div>
<div class="t" style="left:63.20px;top:565.26px;font-size:17.30px;color:#505050;transform:scaleX(0.8968);">ProductCategoryList</div>
<div class="t" style="left:63.20px;top:601.26px;font-size:17.30px;color:#505050;transform:scaleX(0.9044);">ProductList with client inform...</div>
<div class="t" style="left:63.25px;top:637.26px;font-size:17.30px;color:#505050;transform:scaleX(0.8459);">ProductsACTIVE</div>
<div class="t" style="left:63.25px;top:673.26px;font-size:17.30px;color:#505050;transform:scaleX(0.8542);">ProductsALL</div>
<div class="t" style="left:63.20px;top:709.26px;font-size:17.30px;color:#505050;transform:scaleX(0.9049);">ProductsAllsortedbystatus</div>
<div class="t" style="left:19.02px;top:741.36px;font-size:17.88px;color:#585858;font-weight:700;transform:scaleX(0.9842);">Forms</div>
<div class="t" style="left:63.20px;top:772.86px;font-size:17.30px;color:#505050;transform:scaleX(0.9044);">ProductCategory</div>
<div class="t" style="left:362.09px;top:198.77px;font-size:16.57px;color:#383a44;font-weight:700;transform:scaleX(0.9125);">ProductCategoryList</div>
<div class="t" style="left:456.41px;top:272.23px;font-size:34.45px;color:#383d48;transform:scaleX(0.9448);">ProductCategoryList</div>
<div class="t" style="left:1032.40px;top:270.73px;font-size:19.33px;color:#404040;transform:scaleX(0.9834);">Saturday, January 8, 2022</div>
<div class="t" style="left:1155.40px;top:306.63px;font-size:19.33px;color:#404040;">3:35:18 PM</div>
<div class="t" style="left:363.24px;top:346.55px;font-size:18.60px;color:#595959;transform:scaleX(1.0575);">ProductCategoryID</div>
<div class="t" style="left:672.14px;top:346.45px;font-size:18.60px;color:#595959;transform:scaleX(1.0637);">Description</div>
<div class="t" style="left:364.45px;top:389.85px;font-size:18.60px;color:#fff;transform:scaleX(1.0491);">M01AB</div>
<div class="t" style="left:674.30px;top:389.85px;font-size:18.60px;color:#3a3a3a;transform:scaleX(1.0802);">Anti-inflammatory and antirheumatic products, non-steroids,</div>
<div class="t" style="left:364.47px;top:454.55px;font-size:18.60px;color:#3a3a3a;transform:scaleX(1.0307);">M01AE</div>
<div class="t" style="left:674.30px;top:454.55px;font-size:18.60px;color:#3a3a3a;transform:scaleX(1.0804);">Anti-inflammatory and antirheumatic products, non-steroids,</div>
<div class="t" style="left:364.48px;top:519.55px;font-size:18.60px;color:#3a3a3a;transform:scaleX(1.0169);">N02BA</div>
<div class="t" style="left:674.30px;top:519.55px;font-size:18.60px;color:#3a3a3a;transform:scaleX(1.0395);">Other analgesics and antipyretics, Salicylic acid and derivatives</div>
<div class="t" style="left:364.46px;top:557.75px;font-size:18.60px;color:#3a3a3a;transform:scaleX(1.0402);">N02BE/B</div>
<div class="t" style="left:674.30px;top:557.75px;font-size:18.60px;color:#3a3a3a;transform:scaleX(1.0351);">Other analgesics and antipyretics, Pyrazolones and Anilides</div>
<div class="t" style="left:364.46px;top:595.95px;font-size:18.60px;color:#3a3a3a;transform:scaleX(1.0441);">N05B</div>
<div class="t" style="left:673.27px;top:595.95px;font-size:18.60px;color:#3a3a3a;transform:scaleX(1.0309);">Psycholeptics drugs, Anxiolytic drugs</div>
<div class="t" style="left:364.47px;top:634.15px;font-size:18.60px;color:#3a3a3a;transform:scaleX(1.0302);">N05C</div>
<div class="t" style="left:673.27px;top:634.15px;font-size:18.60px;color:#3a3a3a;transform:scaleX(1.0269);">Psycholeptics drugs, Hypnotics and sedatives drugs</div>
<div class="t" style="left:364.50px;top:672.35px;font-size:18.60px;color:#3a3a3a;transform:scaleX(0.9979);">R03</div>
<div class="t" style="left:673.25px;top:672.35px;font-size:18.60px;color:#3a3a3a;transform:scaleX(1.0517);">Drugs for obstructive airway diseases</div>
<div class="t" style="left:364.50px;top:710.55px;font-size:18.60px;color:#3a3a3a;transform:scaleX(0.9979);">R06</div>
<div class="t" style="left:674.30px;top:710.55px;font-size:18.60px;color:#3a3a3a;transform:scaleX(1.0513);">Antihistamines for systemic use</div>
<div class="t" style="left:674.30px;top:415.25px;font-size:18.60px;color:#3a3a3a;transform:scaleX(1.0444);">Acetic acid derivatives and related substances</div>
<div class="t" style="left:673.24px;top:479.55px;font-size:18.60px;color:#3a3a3a;transform:scaleX(1.0557);">Propionic acid derivatives</div>
<div class="t" style="left:879.59px;top:785.82px;font-size:18.75px;color:#404040;transform:scaleX(1.0086);">Page 1 of 1</div>
<!-- right edge -->
<div class="abs" style="left:1300px;top:0;width:2px;height:842px;background:#fff"></div>
<div class="abs" style="left:0;top:806px;width:318px;height:36px;background:#fff"></div>
</body></html>
